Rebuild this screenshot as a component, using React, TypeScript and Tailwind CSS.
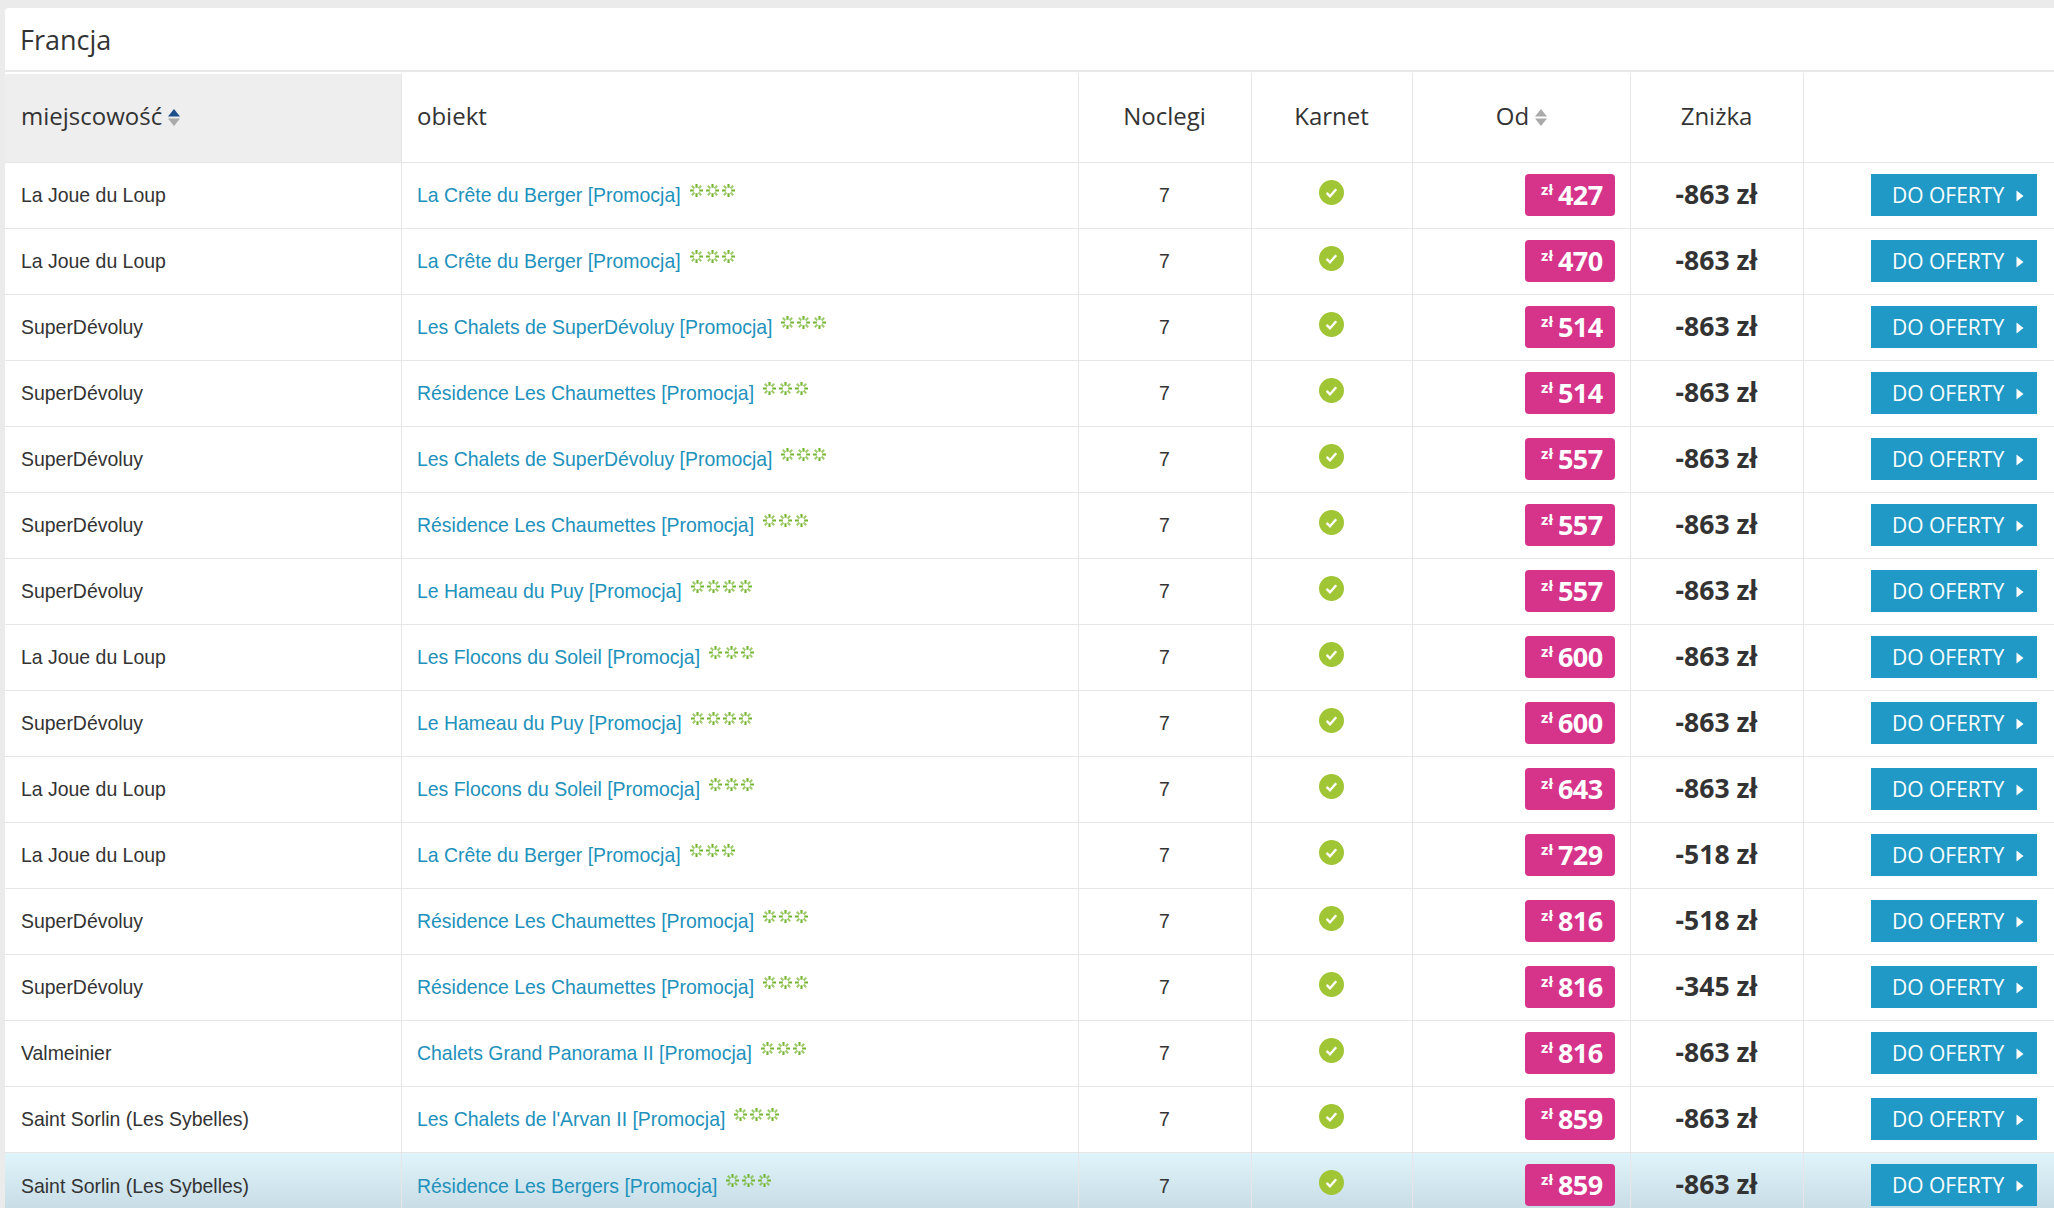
const rows: [string, string, number, number, string][] = [
  ["La Joue du Loup", "La Crête du Berger [Promocja]", 3, 427, "-863 zł"],
  ["La Joue du Loup", "La Crête du Berger [Promocja]", 3, 470, "-863 zł"],
  ["SuperDévoluy", "Les Chalets de SuperDévoluy [Promocja]", 3, 514, "-863 zł"],
  ["SuperDévoluy", "Résidence Les Chaumettes [Promocja]", 3, 514, "-863 zł"],
  ["SuperDévoluy", "Les Chalets de SuperDévoluy [Promocja]", 3, 557, "-863 zł"],
  ["SuperDévoluy", "Résidence Les Chaumettes [Promocja]", 3, 557, "-863 zł"],
  ["SuperDévoluy", "Le Hameau du Puy [Promocja]", 4, 557, "-863 zł"],
  ["La Joue du Loup", "Les Flocons du Soleil [Promocja]", 3, 600, "-863 zł"],
  ["SuperDévoluy", "Le Hameau du Puy [Promocja]", 4, 600, "-863 zł"],
  ["La Joue du Loup", "Les Flocons du Soleil [Promocja]", 3, 643, "-863 zł"],
  ["La Joue du Loup", "La Crête du Berger [Promocja]", 3, 729, "-518 zł"],
  ["SuperDévoluy", "Résidence Les Chaumettes [Promocja]", 3, 816, "-518 zł"],
  ["SuperDévoluy", "Résidence Les Chaumettes [Promocja]", 3, 816, "-345 zł"],
  ["Valmeinier", "Chalets Grand Panorama II [Promocja]", 3, 816, "-863 zł"],
  ["Saint Sorlin (Les Sybelles)", "Les Chalets de l'Arvan II [Promocja]", 3, 859, "-863 zł"],
  ["Saint Sorlin (Les Sybelles)", "Résidence Les Bergers [Promocja]", 3, 859, "-863 zł"],
];

function Star() {
  return (
    <svg width="13" height="13" viewBox="0 0 13 13" className="block">
      <g stroke="#74b52f" strokeWidth="2.1">
        <path d="M6.5 0v3.8M6.5 9.2V13M0 6.5h3.8M9.2 6.5H13" />
        <path d="M1.8 1.8l2.6 2.6M8.6 8.6l2.6 2.6M11.2 1.8L8.6 4.4M4.4 8.6l-2.6 2.6" strokeOpacity="0.7" />
      </g>
    </svg>
  );
}

function Sort({ active }: { active?: boolean }) {
  return (
    <svg width="14" height="19" viewBox="0 0 14 19" className="inline-block ml-[5px] align-[-2px]">
      <path d="M7 1l6 7.5H1z" fill={active ? "#1f4e8c" : "#aaaaaa"} />
      <path d="M7 18l6-7.5H1z" fill="#aaaaaa" />
    </svg>
  );
}

function Check() {
  return (
    <svg width="25" height="25" viewBox="0 0 25 25" className="block mx-auto -mt-[5px]">
      <circle cx="12.5" cy="12.5" r="12.5" fill="#a0c535" />
      <path d="M7.6 12.8l3.4 3.5 6.2-7" fill="none" stroke="#ffffff" strokeWidth="2.4" />
    </svg>
  );
}

export default function App() {
  const th = "border-r border-[#e6e6e6] font-normal text-[24px] text-[#333333] text-center align-middle pb-[2px]";
  const td = "border-r border-t border-[#e6e6e6] align-middle p-0";
  const arial = "text-[19.45px] font-['Liberation_Sans',sans-serif] pt-[2px]";
  return (
    <div className="h-[1208px] overflow-hidden bg-[#ebebeb] pt-[8px] pl-[5px] font-['Open_Sans',sans-serif]">
      <div className="bg-white rounded-tl-[4px] h-[1200px]">
        <div className="h-[64px] flex items-center pl-[15px] pt-[2px] border-b-2 border-[#e8e8e8] text-[27px] text-[#333333]">
          Francja
        </div>
        <table className="table-fixed border-collapse w-[2049px]">
          <colgroup>
            <col className="w-[396px]" />
            <col className="w-[677px]" />
            <col className="w-[173px]" />
            <col className="w-[161px]" />
            <col className="w-[218px]" />
            <col className="w-[173px]" />
            <col className="w-[251px]" />
          </colgroup>
          <thead>
            <tr className="h-[89px]">
              <th className={`${th} bg-[#eeeeee] border-t-2 border-t-white text-left pl-[16px] !pb-[4px]`}>
                miejscowość
                <Sort active />
              </th>
              <th className={`${th} text-left pl-[15.5px]`}>obiekt</th>
              <th className={th}>Noclegi</th>
              <th className={th}>Karnet</th>
              <th className={`${th} pl-[2px]`}>
                Od
                <Sort />
              </th>
              <th className={th}>Zniżka</th>
              <th className="" />
            </tr>
          </thead>
          <tbody>
            {rows.map(([place, name, stars, price, off], i) => (
              <tr
                key={i}
                className={
                  i === 15
                    ? "h-[66px] bg-gradient-to-b from-[#e0f4fb] to-[#c5d9e3]"
                    : "h-[66px]"
                }
              >
                <td className={`${td} pl-[16px] text-[#333333] ${arial}`}>{place}</td>
                <td className={`${td} pl-[15.5px] text-[#2191bb] ${arial}`}>
                  <div className="flex items-center">
                    <span>{name}</span>
                    <span className="flex gap-[3px] ml-[9px] -mt-[11px]">
                      {Array.from({ length: stars }).map((_, k) => (
                        <Star key={k} />
                      ))}
                    </span>
                  </div>
                </td>
                <td className={`${td} text-center text-[#333333] ${arial}`}>7</td>
                <td className={td}>
                  <Check />
                </td>
                <td className={`${td} pr-[15px]`}>
                  <div className="ml-auto w-[90px] h-[42px] rounded-[4px] bg-[#d6338b] text-white font-bold flex items-center justify-end pr-[12px]">
                    <span className="text-[15px] -mt-[12px] mr-[5px]">zł</span>
                    <span className="text-[27px] leading-none tracking-[-0.6px] -mt-[2px]">{price}</span>
                  </div>
                </td>
                <td className={`${td} text-center font-bold text-[26.5px] text-[#333333]`}>{off}</td>
                <td className="border-t border-[#e6e6e6] p-0 pr-[17px]">
                  <div className="ml-auto w-[166px] h-[42px] bg-[#2099c6] text-white text-[21px] flex items-center pl-[21px] pt-[1px]">
                    <span>DO OFERTY</span>
                    <svg width="8" height="12" viewBox="0 0 8 12" className="ml-[12px]">
                      <path d="M0.5 0.5l7 5.5-7 5.5z" fill="#ffffff" />
                    </svg>
                  </div>
                </td>
              </tr>
            ))}
          </tbody>
        </table>
      </div>
    </div>
  );
}
